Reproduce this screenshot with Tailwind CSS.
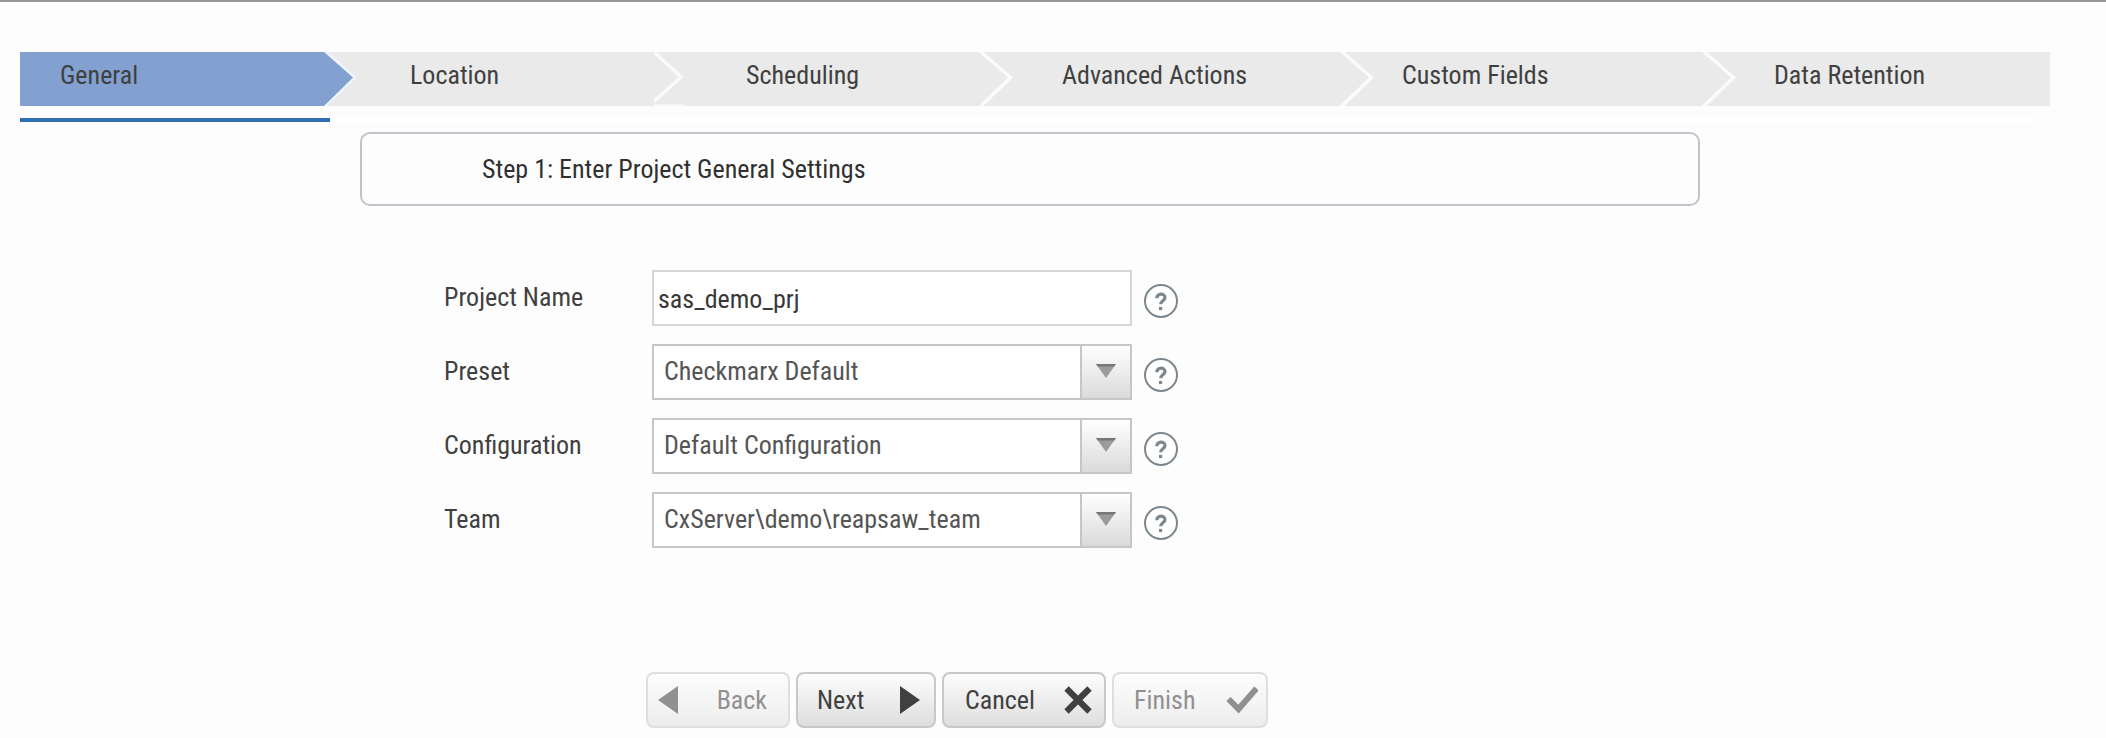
<!DOCTYPE html>
<html lang="en">
<head>
<meta charset="utf-8">
<title>Project General Settings</title>
<script src="https://cdn.jsdelivr.net/npm/@tailwindcss/browser@4"></script>
</head>
<body class="h-[738px] overflow-hidden border-t-2 border-[#999797] bg-[#fdfdfd] font-['Roboto_Condensed',Roboto,sans-serif] text-[26px] leading-[30px] text-[#404040]">

<svg class="hidden">
  <symbol id="help" viewBox="0 0 34 34">
    <circle cx="17" cy="17" r="16" fill="#fff" stroke="#7d888e" stroke-width="2"/>
    <path d="M12.8 14.2c0-5.3 8.2-5.2 8.2-.6 0 3.2-4.3 3.1-4.3 6.7" fill="none" stroke="#7d888e" stroke-width="3.2"/>
    <path d="M15 22.900h3.200v3.200h-3.200z" fill="#7d888e"/>
  </symbol>
  <symbol id="arrow" viewBox="0 0 20 14">
    <path d="M0 0h20L10 14z" fill="#9b9b9b"/>
    <path d="M0 0h20l-1.800 2.500H1.800z" fill="#777"/>
  </symbol>
  <symbol id="chevron" viewBox="0 0 36 54">
    <path d="M2 -1L32.500 25.500L2 55" fill="none" stroke="#fbfbfb" stroke-width="3.500"/>
  </symbol>
</svg>

<!-- Wizard steps -->
<nav class="ml-5 mt-[50px] flex h-[54px] w-[2030px] bg-[#eaeaea]">
  <div class="w-[304px] bg-[#82a0d0] pl-10 pt-2">General</div>
  <div class="flex w-[330px]">
    <svg class="h-[54px] w-9 shrink-0" viewBox="0 0 36 54"><path d="M1.500 -1L30 25.500L1 54" fill="none" stroke="#eef6fd" stroke-width="3"/><path d="M0 0L29 25.500L0 54z" fill="#82a0d0"/></svg>
    <span class="pl-[50px] pt-2">Location</span>
  </div>
  <div class="flex w-[324px]">
    <svg class="h-[54px] w-9 shrink-0" viewBox="0 0 36 54"><path d="M-1 -1L27 25L-4 53" fill="none" stroke="#fafafa" stroke-width="3.500"/><path d="M0 53H30" stroke="#f6f6f6" stroke-width="2"/></svg>
    <span class="pl-[56px] pt-2">Scheduling</span>
  </div>
  <div class="flex w-[361px]">
    <svg class="h-[54px] w-9 shrink-0"><use href="#chevron"/></svg>
    <span class="pl-[48px] pt-2">Advanced Actions</span>
  </div>
  <div class="flex w-[362px]">
    <svg class="h-[54px] w-9 shrink-0"><use href="#chevron"/></svg>
    <span class="pl-[27px] pt-2">Custom Fields</span>
  </div>
  <div class="flex flex-1">
    <svg class="h-[54px] w-9 shrink-0"><use href="#chevron"/></svg>
    <span class="pl-[37px] pt-2">Data Retention</span>
  </div>
</nav>
<div class="ml-5 mt-3 h-1 w-[2014px] bg-white"><div class="h-1 w-[310px] bg-[#2e70b0]"></div></div>

<h1 class="ml-[360px] mt-[10px] h-[74px] w-[1340px] rounded-[10px] border-2 border-[#c0c4ca] pl-[120px] pt-5 text-[#303030]">Step 1: Enter Project General Settings</h1>

<!-- Project settings -->
<form class="ml-[444px] mt-16 flex flex-col gap-[18px]">
  <div class="flex h-14">
    <label class="w-[208px] pt-3">Project Name</label>
    <input class="h-14 w-[480px] border-2 border-[#d6d6d6] bg-white pb-0.5 pl-1 pt-1 text-[#383838]" value="sas_demo_prj">
    <svg class="ml-3 mt-3.5 size-[34px]"><use href="#help"/></svg>
  </div>
  <div class="flex h-14">
    <label class="w-[208px] pt-3">Preset</label>
    <div class="flex h-14 w-[480px] justify-between border-2 border-[#c6c6c6] bg-white text-[#555]">
      <span class="pl-[10px] pt-[10px]">Checkmarx Default</span>
      <span class="flex w-[50px] justify-center border-l-2 border-[#c6c6c6] bg-linear-to-b from-white to-[#dadada] pt-[18px]"><svg class="h-3.5 w-5"><use href="#arrow"/></svg></span>
    </div>
    <svg class="ml-3 mt-3.5 size-[34px]"><use href="#help"/></svg>
  </div>
  <div class="flex h-14">
    <label class="w-[208px] pt-3">Configuration</label>
    <div class="flex h-14 w-[480px] justify-between border-2 border-[#c6c6c6] bg-white text-[#555]">
      <span class="pl-[10px] pt-[10px]">Default Configuration</span>
      <span class="flex w-[50px] justify-center border-l-2 border-[#c6c6c6] bg-linear-to-b from-white to-[#dadada] pt-[18px]"><svg class="h-3.5 w-5"><use href="#arrow"/></svg></span>
    </div>
    <svg class="ml-3 mt-3.5 size-[34px]"><use href="#help"/></svg>
  </div>
  <div class="flex h-14">
    <label class="w-[208px] pt-3">Team</label>
    <div class="flex h-14 w-[480px] justify-between border-2 border-[#c6c6c6] bg-white text-[#555]">
      <span class="pl-[10px] pt-[10px]">CxServer\demo\reapsaw_team</span>
      <span class="flex w-[50px] justify-center border-l-2 border-[#c6c6c6] bg-linear-to-b from-white to-[#dadada] pt-[18px]"><svg class="h-3.5 w-5"><use href="#arrow"/></svg></span>
    </div>
    <svg class="ml-3 mt-3.5 size-[34px]"><use href="#help"/></svg>
  </div>
</form>

<!-- Wizard navigation -->
<div class="ml-[646px] mt-[124px] flex gap-1.5">
  <button class="flex h-14 w-36 items-center justify-between rounded-lg border-2 border-[#dedede] bg-linear-to-b from-[#fdfdfd] to-[#ededed] pl-[10px] pr-[21px] text-[#909090]">
    <svg class="h-7 w-5" viewBox="0 0 20 28"><path d="M20 0v28L0 14z" fill="#909090"/></svg>Back
  </button>
  <button class="flex h-14 w-[140px] items-center justify-between rounded-lg border-2 border-[#c8c8c8] bg-linear-to-b from-[#fdfdfd] to-[#dedede] pl-[19px] pr-[14px]">
    Next<svg class="h-7 w-5" viewBox="0 0 20 28"><path d="M0 0v28L20 14z" fill="#404040"/></svg>
  </button>
  <button class="flex h-14 w-[164px] items-center justify-between rounded-lg border-2 border-[#c8c8c8] bg-linear-to-b from-[#fdfdfd] to-[#dedede] pl-[21px] pr-3">
    Cancel<svg class="size-7" viewBox="0 0 28 28"><path d="M2.500 2.500l23 23M25.500 2.500l-23 23" stroke="#404040" stroke-width="6.200"/></svg>
  </button>
  <button class="flex h-14 w-[156px] items-center justify-between rounded-lg border-2 border-[#dedede] bg-linear-to-b from-[#fdfdfd] to-[#ededed] pl-5 pr-2 text-[#909090]">
    Finish<svg class="h-7 w-8" viewBox="0 0 32 28"><path d="M2.500 13L12.500 23L30.500 2.500" fill="none" stroke="#909090" stroke-width="6"/></svg>
  </button>
</div>
</body>
</html>
